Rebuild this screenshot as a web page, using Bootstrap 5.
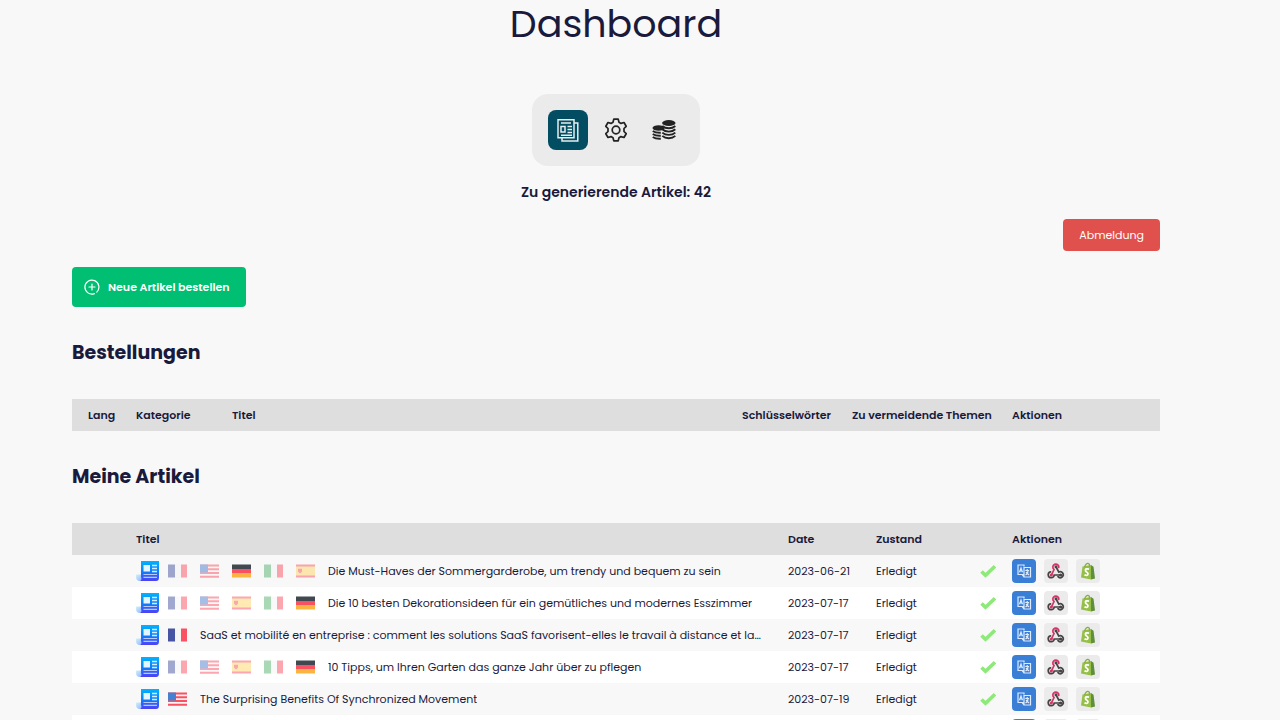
<!DOCTYPE html>
<html lang="de">
<head>
<meta charset="utf-8">
<meta name="viewport" content="width=device-width, initial-scale=1">
<title>Dashboard</title>
<link href="https://cdn.jsdelivr.net/npm/bootstrap@5.3.0/dist/css/bootstrap.min.css" rel="stylesheet">
<style>
  body { font-family: Poppins, Inter, "Open Sans", sans-serif; font-size: 11px; line-height: 20px; color: #1a1a3c; background: #f8f8f8; }
  .page { padding: 0 120px 0 72px; }
  h1 { font-size: 38px; line-height: 48px; font-weight: 400; padding-bottom: 46px; }
  h2 { font-size: 19px; line-height: 28px; font-weight: 700; }
  .switcher { background: #ebebeb; border-radius: 16px; }
  .tab-btn { width: 40px; height: 40px; border-radius: 8px; color: #222; }
  .tab-btn.active, .tab-btn:active { background: #024d61 !important; color: #fff; }
  .quota { font-size: 14px; line-height: 21px; font-weight: 600; }
  .btn-out { --bs-btn-color: #fff; --bs-btn-bg: #e0504d; --bs-btn-hover-bg: #c94340; --bs-btn-hover-color: #fff; height: 32px; border: 0; font-size: 11px; border-radius: 4px; }
  .btn-order { --bs-btn-color: #fff; --bs-btn-bg: #00bf72; --bs-btn-hover-bg: #00a864; --bs-btn-hover-color: #fff; height: 40px; border: 0; font-size: 11px; font-weight: 600; border-radius: 4px; padding: 0 16px 0 12px; }
  .grid-table { table-layout: fixed; width: 100%; }
  .grid-table th, .grid-table td { height: 32px; padding: 0 0 0 16px; white-space: nowrap; vertical-align: middle; }
  .grid-table th { background: #dedede; font-weight: 600; }
  .grid-table tbody tr:nth-child(even) { background: #fff; }
  .w-48 { width: 48px; } .w-88 { width: 88px; } .w-96 { width: 96px; } .w-104 { width: 104px; }
  .w-110 { width: 110px; } .w-160 { width: 160px; } .w-164 { width: 164px; } .w-32 { width: 32px; }
  .flag { width: 20px; height: 14px; margin-right: 12px; flex: none; opacity: .5; }
  .flag.on { opacity: 1; }
  .news { width: 24px; height: 24px; margin-right: 8px; flex: none; }
  .act { width: 24px; height: 24px; border-radius: 4px; background: #ebebeb; }
  .act.translate { background: #3a7fd5; }
  svg { display: block; }
</style>
</head>
<body>
<svg width="0" height="0" class="position-absolute" aria-hidden="true">
  <defs>
  <linearGradient id="paper" x2="0" y2="1"><stop offset="0" stop-color="#00b4ff"/><stop offset=".5" stop-color="#0d82f8"/><stop offset="1" stop-color="#5040f5"/></linearGradient>
  <linearGradient id="curl" x2="1" y2="1"><stop offset="0" stop-color="#d5efff"/><stop offset="1" stop-color="#86b4fb"/></linearGradient>
  <symbol id="news" viewBox="0 0 24 24"><path d="M0 15.500h5V19q0 2.500 2 3H4q-4 0-4-4z" fill="url(#curl)"/><path d="M5 2h18v16.500q0 3.500-3 3.500H4q2-1 1-4z" fill="url(#paper)"/><path d="M7.500 6H14v6.500H7.500z" fill="#e3f6ff"/><path d="M16 6.500h5M16 9.500h5M16 12.500h5" stroke="#d6efff" stroke-width="1.300"/><path d="M7.500 15.500H21M7.500 18.300H21" stroke="#b9c9ff" stroke-width="1.200"/></symbol>
  <symbol id="fr" viewBox="0 0 20 14"><path fill="#4654a3" d="M0 .5h7v13H0z"/><path fill="#f5f5f5" d="M7 .5h6v13H7z"/><path fill="#fa5162" d="M13 .5h6v13h-6z"/></symbol>
  <symbol id="it" viewBox="0 0 20 14"><path fill="#55b26e" d="M0 .5h7v13H0z"/><path fill="#f5f5f5" d="M7 .5h6v13H7z"/><path fill="#fa5162" d="M13 .5h6v13h-6z"/></symbol>
  <symbol id="de" viewBox="0 0 20 14"><path fill="#414850" d="M0 .5h19v4.500H0z"/><path fill="#fa5162" d="M0 5h19v4H0z"/><path fill="#fbb43f" d="M0 9h19v4.500H0z"/></symbol>
  <symbol id="es" viewBox="0 0 20 14"><path fill="#fa5162" d="M0 .5h19v13H0z"/><path fill="#ffd66b" d="M0 2.500h19v9H0z"/><path fill="#fa5162" d="M2 4.800h4v3L4 9.500 2 7.800z"/></symbol>
  <symbol id="us" viewBox="0 0 20 14"><path fill="#f5f5f5" d="M0 .5h19v13H0z"/><path d="M0 1.500h19M0 5.300h19M0 9h19M0 12.700h19" stroke="#fa5162" stroke-width="1.900"/><path fill="#4680d0" d="M0 .5h8v8H0z"/></symbol>
  <symbol id="check" viewBox="0 0 16 16"><path d="M1.500 8.500 5.500 12.300 15 3.300" fill="none" stroke="#8fe87a" stroke-width="3.600"/></symbol>
  <symbol id="trans" viewBox="0 0 24 24"><g fill="none" stroke="#dcebff" stroke-width="1.200"><path d="M12 7.500V6H6v9.500h5.500M12 8.500h6.500v9.500H12zM10 15.500l2 2.500"/><path d="M7.500 13.300 9 9l1.500 4.300M8 12h2M13.300 11.500H17M15.200 10v1.500M13.500 16c2-1 2.500-3 2.500-4.500M14 13l3 3"/></g></symbol>
  <symbol id="hook" viewBox="0 0 24 24"><g fill="none" stroke-width="1.700" stroke-linecap="round"><path d="M14.800 8.500A3 3 0 1 0 10 10.500L7.700 15.500" stroke="#d63265"/><path d="M12 7.800 14.800 13a3 3 0 1 1-.8 4.700" stroke="#444"/><path d="M6.500 12.800a3 3 0 1 0 3.700 3.200H16" stroke="#444"/></g><circle cx="12" cy="7.800" r="1.500" fill="#444"/><circle cx="7.300" cy="16" r="1.500" fill="#d63265"/><circle cx="16.700" cy="16" r="1.500" fill="#444"/></symbol>
  <symbol id="shop" viewBox="0 0 24 24"><path d="M6.500 7.500 15 6v14.500L5 18.500z" fill="#95bf47"/><path d="m15 6 2.500 1.700L19 19.500l-4 1z" fill="#5e8e3e"/><path d="M8.500 8Q10 4 12 4.300T13.500 8" fill="none" stroke="#85ae40" stroke-width="1.200"/><path d="M13 10.200Q9 9 9.500 11.500c.3 1.700 2.700 1.700 2.500 3.500-.2 1.600-2 1.800-3.500.8" fill="none" stroke="#fff" stroke-width="1.800"/></symbol>
  </defs>
</svg>

<main class="page">
  <h1 class="text-center mb-0">Dashboard</h1>
  <div class="d-flex justify-content-center">
    <nav class="switcher d-flex gap-2 p-3" aria-label="Bereiche">
      <button class="btn tab-btn active p-0 border-0 d-flex align-items-center justify-content-center" aria-label="Artikel">
        <svg width="24" height="24" viewBox="0 0 24 24" fill="none" stroke="#e5eef0" stroke-width="1.500"><path d="M2 1.700h16v18H2zM18 5h3.800v18H6v-3.300"/><path d="M5 5h10M11.500 8.500H16M11.500 11.500H16M11.500 14.500H16M5 17.200h11M5 8.500h4v5.500H5z"/></svg>
      </button>
      <button class="btn tab-btn p-0 border-0 d-flex align-items-center justify-content-center" aria-label="Einstellungen">
        <svg width="24" height="24" viewBox="0 0 24 24" fill="none" stroke="currentColor" stroke-width="1.700" stroke-linejoin="round"><circle cx="12" cy="12" r="3.800"/><path d="M9.800 1.200h4.400l.8 3 2 1.200 3-.9 2.200 3.800-2.200 2.200v3l2.200 2.200-2.200 3.800-3-.9-2 1.200-.8 3H9.800l-.8-3-2-1.200-3 .9-2.200-3.800L4 13.500v-3L1.800 8.300 4 4.500l3 .9 2-1.200z"/></svg>
      </button>
      <button class="btn tab-btn p-0 border-0 d-flex align-items-center justify-content-center" aria-label="Guthaben">
        <svg width="24" height="24" viewBox="0 0 24 24"><g fill="currentColor"><ellipse cx="16.800" cy="5" rx="6.700" ry="3"/><ellipse cx="6.500" cy="10" rx="6" ry="2.800"/></g><path d="M10.300 8q2.500 2.300 6.500 2.300T23.300 8M10.300 11.300q2.500 2.300 6.500 2.300t6.500-2.300M10.300 14.600q2.500 2.300 6.500 2.300t6.500-2.300M10.300 17.900q2.500 2.300 6.500 2.300t6.500-2.300M.8 13q2.500 2 8 1.800M.8 16q2.500 2 8 1.800M.8 19q2.500 2 8 1.800" fill="none" stroke="currentColor" stroke-width="1.900"/></svg>
      </button>
    </nav>
  </div>
  <p class="quota text-center mt-3 mb-3">Zu generierende Artikel: 42</p>
  <div class="d-flex justify-content-end mb-3"><button class="btn btn-out px-3 py-0">Abmeldung</button></div>
  <button class="btn btn-order d-flex align-items-center gap-2">
    <svg width="16" height="16" viewBox="2 2 16 16" fill="none" stroke="#fff" stroke-width="1.200" stroke-linecap="round"><path d="M12.500 16.600a7 7 0 1 1 2.300-1.500M10 7v6M7 10h6"/></svg>
    Neue Artikel bestellen
  </button>

  <h2 class="mt-4 pt-2 mb-4 pb-2">Bestellungen</h2>
  <table class="grid-table">
    <thead><tr><th class="w-48">Lang</th><th class="w-96">Kategorie</th><th>Titel</th><th class="w-110">Schlüsselwörter</th><th class="w-160">Zu vermeidende Themen</th><th class="w-164">Aktionen</th></tr></thead>
  </table>

  <h2 class="mt-4 pt-2 mb-4 pb-2">Meine Artikel</h2>
  <table class="grid-table">
    <thead><tr><th class="w-48"></th><th>Titel</th><th class="w-88">Date</th><th class="w-104">Zustand</th><th class="w-32"></th><th class="w-164">Aktionen</th></tr></thead>
    <tbody>
      <tr><td></td><td><div class="d-flex align-items-center"><svg class="news"><use href="#news"/></svg><svg class="flag"><use href="#fr"/></svg><svg class="flag"><use href="#us"/></svg><svg class="flag on"><use href="#de"/></svg><svg class="flag"><use href="#it"/></svg><svg class="flag"><use href="#es"/></svg><span class="text-truncate">Die Must-Haves der Sommergarderobe, um trendy und bequem zu sein</span></div></td><td>2023-06-21</td><td>Erledigt</td><td><svg width="16" height="16"><use href="#check"/></svg></td>
        <td><div class="d-flex gap-2"><button class="btn act translate p-0 border-0" aria-label="Übersetzen"><svg width="24" height="24"><use href="#trans"/></svg></button><button class="btn act p-0 border-0" aria-label="Webhook"><svg width="24" height="24"><use href="#hook"/></svg></button><button class="btn act p-0 border-0" aria-label="Shopify"><svg width="24" height="24"><use href="#shop"/></svg></button></div></td></tr>
      <tr><td></td><td><div class="d-flex align-items-center"><svg class="news"><use href="#news"/></svg><svg class="flag"><use href="#fr"/></svg><svg class="flag"><use href="#us"/></svg><svg class="flag"><use href="#es"/></svg><svg class="flag"><use href="#it"/></svg><svg class="flag on"><use href="#de"/></svg><span class="text-truncate">Die 10 besten Dekorationsideen für ein gemütliches und modernes Esszimmer</span></div></td><td>2023-07-17</td><td>Erledigt</td><td><svg width="16" height="16"><use href="#check"/></svg></td>
        <td><div class="d-flex gap-2"><button class="btn act translate p-0 border-0" aria-label="Übersetzen"><svg width="24" height="24"><use href="#trans"/></svg></button><button class="btn act p-0 border-0" aria-label="Webhook"><svg width="24" height="24"><use href="#hook"/></svg></button><button class="btn act p-0 border-0" aria-label="Shopify"><svg width="24" height="24"><use href="#shop"/></svg></button></div></td></tr>
      <tr><td></td><td><div class="d-flex align-items-center"><svg class="news"><use href="#news"/></svg><svg class="flag on"><use href="#fr"/></svg><span class="text-truncate">SaaS et mobilité en entreprise : comment les solutions SaaS favorisent-elles le travail à distance et la…</span></div></td><td>2023-07-17</td><td>Erledigt</td><td><svg width="16" height="16"><use href="#check"/></svg></td>
        <td><div class="d-flex gap-2"><button class="btn act translate p-0 border-0" aria-label="Übersetzen"><svg width="24" height="24"><use href="#trans"/></svg></button><button class="btn act p-0 border-0" aria-label="Webhook"><svg width="24" height="24"><use href="#hook"/></svg></button><button class="btn act p-0 border-0" aria-label="Shopify"><svg width="24" height="24"><use href="#shop"/></svg></button></div></td></tr>
      <tr><td></td><td><div class="d-flex align-items-center"><svg class="news"><use href="#news"/></svg><svg class="flag"><use href="#fr"/></svg><svg class="flag"><use href="#us"/></svg><svg class="flag"><use href="#es"/></svg><svg class="flag"><use href="#it"/></svg><svg class="flag on"><use href="#de"/></svg><span class="text-truncate">10 Tipps, um Ihren Garten das ganze Jahr über zu pflegen</span></div></td><td>2023-07-17</td><td>Erledigt</td><td><svg width="16" height="16"><use href="#check"/></svg></td>
        <td><div class="d-flex gap-2"><button class="btn act translate p-0 border-0" aria-label="Übersetzen"><svg width="24" height="24"><use href="#trans"/></svg></button><button class="btn act p-0 border-0" aria-label="Webhook"><svg width="24" height="24"><use href="#hook"/></svg></button><button class="btn act p-0 border-0" aria-label="Shopify"><svg width="24" height="24"><use href="#shop"/></svg></button></div></td></tr>
      <tr><td></td><td><div class="d-flex align-items-center"><svg class="news"><use href="#news"/></svg><svg class="flag on"><use href="#us"/></svg><span class="text-truncate">The Surprising Benefits Of Synchronized Movement</span></div></td><td>2023-07-19</td><td>Erledigt</td><td><svg width="16" height="16"><use href="#check"/></svg></td>
        <td><div class="d-flex gap-2"><button class="btn act translate p-0 border-0" aria-label="Übersetzen"><svg width="24" height="24"><use href="#trans"/></svg></button><button class="btn act p-0 border-0" aria-label="Webhook"><svg width="24" height="24"><use href="#hook"/></svg></button><button class="btn act p-0 border-0" aria-label="Shopify"><svg width="24" height="24"><use href="#shop"/></svg></button></div></td></tr>
      <tr><td></td><td></td><td></td><td></td><td></td>
        <td><div class="d-flex gap-2"><button class="btn act translate p-0 border-0" aria-label="Übersetzen"></button><button class="btn act p-0 border-0" aria-label="Webhook"></button><button class="btn act p-0 border-0" aria-label="Shopify"></button></div></td></tr>
    </tbody>
  </table>
</main>
<script src="https://cdn.jsdelivr.net/npm/bootstrap@5.3.0/dist/js/bootstrap.bundle.min.js"></script>
</body>
</html>
